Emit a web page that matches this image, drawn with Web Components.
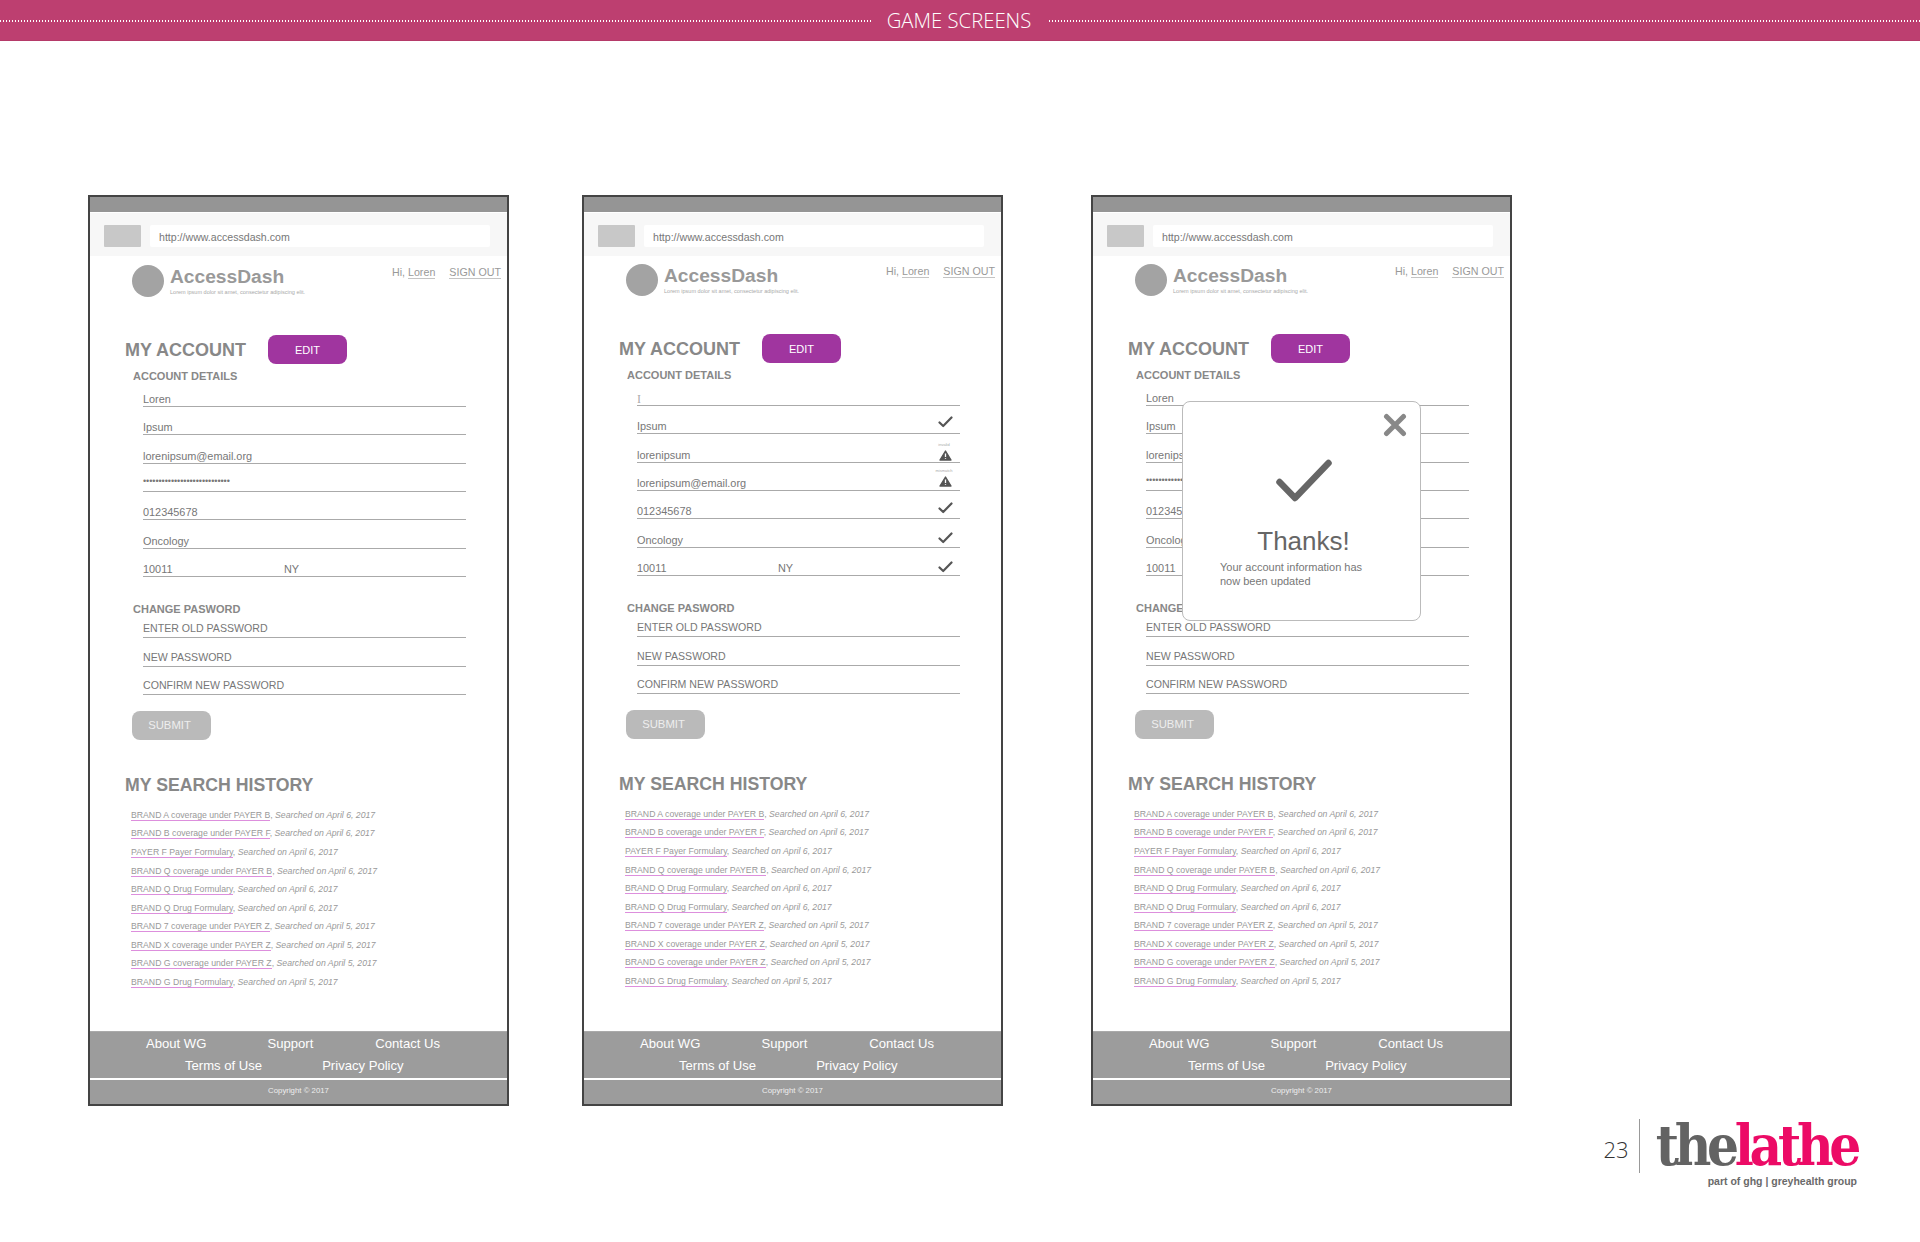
<!DOCTYPE html>
<html>
<head>
<meta charset="utf-8">
<title>Game Screens</title>
<style>
  html, body { margin: 0; background: #fff; }
  body { width: 1920px; height: 1242px; overflow: hidden; font-family: "Liberation Sans", Arial, sans-serif; }
  .row { display: flex; align-items: flex-start; padding: 154px 0 0 88px; }
  #second { margin-left: 73px; }
  #third { margin-left: 88px; }
</style>
</head>
<body>
<page-banner>GAME SCREENS</page-banner>
<div class="row">
  <account-screen mode="view"></account-screen>
  <account-screen id="second" mode="validate" shift="-1"></account-screen>
  <account-screen id="third" mode="thanks" shift="-1"></account-screen>
</div>
<page-brand page="23"></page-brand>

<script>
const CHECK = `<svg width="15" height="12" viewBox="0 0 15 12"><path d="M1.5 6.5 5.2 10 13.5 1.5" fill="none" stroke="#555" stroke-width="2.2" stroke-linecap="round" stroke-linejoin="round"/></svg>`;
const WARN = `<svg width="13" height="11" viewBox="0 0 13 11"><path d="M6.5 1 12 10H1Z" fill="#555" stroke="#555" stroke-width="1.4" stroke-linejoin="round"/><path d="M6.5 3.6V7M6.5 8.2V9" stroke="#fff" stroke-width="1.3"/></svg>`;

const HISTORY = [
  ["BRAND A coverage under PAYER B", "April 6, 2017"],
  ["BRAND B coverage under PAYER F", "April 6, 2017"],
  ["PAYER F Payer Formulary", "April 6, 2017"],
  ["BRAND Q coverage under PAYER B", "April 6, 2017"],
  ["BRAND Q Drug Formulary", "April 6, 2017"],
  ["BRAND Q Drug Formulary", "April 6, 2017"],
  ["BRAND 7 coverage under PAYER Z", "April 5, 2017"],
  ["BRAND X coverage under PAYER Z", "April 5, 2017"],
  ["BRAND G coverage under PAYER Z", "April 5, 2017"],
  ["BRAND G Drug Formulary", "April 5, 2017"],
];

customElements.define("page-banner", class extends HTMLElement {
  constructor() {
    super();
    this.attachShadow({mode: "open"}).innerHTML = `
      <style>
        :host { display: flex; align-items: center; gap: 16px; height: 40px; background: #bd3f70; border-bottom: 1px solid #b53a69;
                color: #fff; font: 300 20.3px "Open Sans", sans-serif; }
        i { flex: 1; height: 2px; margin-top: 1px; background: repeating-linear-gradient(90deg, #fff 0 1.5px, transparent 1.5px 3px); }
        i:last-child { margin-left: 2px; }
      </style>
      <i></i><slot></slot><i></i>`;
  }
});

customElements.define("form-field", class extends HTMLElement {
  constructor() {
    super();
    this.attachShadow({mode: "open"}).innerHTML = `
      <style>
        :host { display: flex; align-items: flex-end; position: relative; box-sizing: border-box; height: 28.35px; margin-left: 18px; width: 323px;
                border-bottom: 1.5px solid #aaa; padding-bottom: 0; font-size: 10.9px; line-height: 14px; color: #777; }
        .second { position: absolute; left: 141px; bottom: 0; }
        .mark { position: absolute; right: 7px; bottom: var(--lift, 5px); line-height: 0; }
        .note { position: absolute; right: 1px; bottom: calc(var(--lift, 2px) + 14px); width: 30px; text-align: center; font-size: 4px; line-height: 5px; color: #aaa; }
        .mark.warn { right: 8px; }
      </style>
      <slot></slot>`;
  }
  connectedCallback() {
    const root = this.shadowRoot;
    const second = this.getAttribute("second");
    if (second) root.innerHTML += `<span class="second">${second}</span>`;
    const mark = this.getAttribute("mark");
    if (mark === "check") root.innerHTML += `<span class="mark">${CHECK}</span>`;
    if (mark === "warn") {
      root.innerHTML += `<span class="mark warn">${WARN}</span><span class="note">${this.getAttribute("note")}</span>`;
    }
  }
});

customElements.define("history-row", class extends HTMLElement {
  constructor() {
    super();
    this.attachShadow({mode: "open"}).innerHTML = `
      <style>
        :host { display: block; height: 18.55px; font-size: 8.7px; line-height: 13px; color: #999; white-space: nowrap; }
        a { color: #999; border-bottom: 1px solid #dd8fdd; }
        em { font-style: italic; }
      </style>
      <a></a>, <em></em>`;
  }
  connectedCallback() {
    this.shadowRoot.querySelector("a").textContent = this.getAttribute("name");
    this.shadowRoot.querySelector("em").textContent = "Searched on " + this.getAttribute("date");
  }
});

customElements.define("thanks-dialog", class extends HTMLElement {
  constructor() {
    super();
    this.attachShadow({mode: "open"}).innerHTML = `
      <style>
        :host { display: flex; flex-direction: column; position: absolute; left: 89px; top: 204px; width: 239px; height: 220px; box-sizing: border-box;
                background: #fff; border: 1.5px solid #bbb; border-radius: 8px; }
        .close { position: absolute; right: 13px; top: 11px; line-height: 0; }
        .tick { margin: 57px 0 0 93px; line-height: 0; }
        h2 { margin: 22px 0 0; font-size: 26px; line-height: 32px; font-weight: 400; color: #666; text-align: center; padding-left: 4px; }
        p { margin: 4px 0 0 37px; font-size: 11px; line-height: 13.5px; color: #777; }
      </style>
      <span class="close"><svg width="24" height="24" viewBox="0 0 24 24"><path d="M3.5 3.5 20.5 20.5M20.5 3.5 3.5 20.5" stroke="#888" stroke-width="5" stroke-linecap="round"/></svg></span>
      <span class="tick"><svg width="56" height="44" viewBox="0 0 56 44"><path d="M3.5 23 19 39 52.5 4" fill="none" stroke="#666" stroke-width="6.5" stroke-linecap="round" stroke-linejoin="round"/></svg></span>
      <h2>Thanks!</h2>
      <p>Your account information has<br>now been updated</p>`;
  }
});

customElements.define("account-screen", class extends HTMLElement {
  constructor() {
    super();
    const shift = Number(this.getAttribute("shift") || 0);
    const mode = this.getAttribute("mode");
    // the dialog covers the state field on the third screen
    const state = mode === "thanks" ? "" : `second="NY"`;
    const details = mode === "validate" ? `
        <form-field><span style="color:#aaa;font-family:'Liberation Serif',serif;font-size:12px;margin-bottom:-1px">I</span></form-field>
        <form-field mark="check">Ipsum</form-field>
        <form-field mark="warn" note="invalid" style="--lift:1px">lorenipsum</form-field>
        <form-field mark="warn" note="mismatch" style="--lift:3px">lorenipsum@email.org</form-field>
        <form-field mark="check" style="--lift:4px">012345678</form-field>
        <form-field mark="check" style="--lift:3px">Oncology</form-field>
        <form-field mark="check" second="NY" style="--lift:2px">10011</form-field>` : `
        <form-field>Loren</form-field>
        <form-field>Ipsum</form-field>
        <form-field>lorenipsum@email.org</form-field>
        <form-field><span style="font-size:9px;letter-spacing:-.05px;margin-bottom:3px">••••••••••••••••••••••••••••</span></form-field>
        <form-field>012345678</form-field>
        <form-field>Oncology</form-field>
        <form-field ${state}>10011</form-field>`;
    const rows = HISTORY.map(h => `<history-row name="${h[0]}" date="${h[1]}"></history-row>`).join("");
    this.attachShadow({mode: "open"}).innerHTML = `
      <style>
        :host { display: flex; flex-direction: column; position: relative; flex: none; box-sizing: border-box; width: 421px; height: 911px;
                border: 2px solid #444; background: #fff; color: #888; }
        .top { flex: none; height: 15px; background: #959595; border-bottom: 1px solid #fff; }
        .bar { flex: none; display: flex; gap: 9px; height: 43px; box-sizing: border-box; padding: 12px 17px 9px 14px; background: #f7f7f7; }
        .bar b { width: 37px; background: #c8c8c8; border-radius: 1px; }
        .bar span { flex: 1; background: #fff; border-radius: 2px; padding: 2px 0 0 9px; font-size: 10.6px; line-height: 21px; color: #777; }
        .head { flex: none; display: flex; height: 79px; box-sizing: border-box; padding: 9px 6px 0 42px; margin-top: ${shift}px; }
        .dot { width: 32px; height: 32px; border-radius: 50%; background: #a3a3a3; }
        .name { margin-left: 6px; font-size: 19.2px; line-height: 24px; font-weight: 700; color: #999; }
        .name small { display: block; font-size: 5.55px; line-height: 6px; font-weight: 400; color: #aaa; margin-top: 0; }
        .user { margin-left: auto; display: flex; gap: 14px; font-size: 10.7px; line-height: 13px; color: #999; }
        .user span { padding-top: 1px; height: 12px; }
        .user u { text-decoration: none; border-bottom: 1.5px solid #c4c4c4; padding-bottom: 0; }
        .body { padding-left: 35px; }
        .title { display: flex; align-items: center; height: 29px; }
        h1 { margin: 0; font-size: 18px; line-height: 22px; font-weight: 700; color: #888; }
        .btn { display: flex; align-items: center; justify-content: center; width: 79px; height: 29px; border-radius: 8px; font-size: 11px; color: #fff; }
        .edit { margin-left: 22px; background: #a0359f; }
        h3 { margin: 5px 0 0 8px; font-size: 11px; line-height: 14px; font-weight: 700; color: #888; }
        .details { margin-top: -4.5px; }
        .change { margin-top: 25px; }
        .pw { margin-top: -6px; }
        .pw form-field { font-size: 10.6px; padding-bottom: 2px; }
        .submit { margin: 16px 0 0 7px; background: #bababa; color: #eee; font-size: 11.3px; box-sizing: border-box; padding-right: 4px; }
        .hist { margin-top: 34.5px; font-size: 17.7px; }
        .list { margin: 12.5px 0 0 6px; }
        .foot { margin-top: auto; flex: none; display: flex; flex-direction: column; height: 73px; box-sizing: border-box; background: #9c9c9c; color: #fff; font-size: 13.1px; line-height: 15px; border-top: 1px solid #aaa; padding-top: 4px; }
        .foot div { display: flex; }
        .one { padding-left: 56px; gap: 61px; }
        .one span + span + span { margin-left: 1px; }
        .two { padding-left: 95px; gap: 60px; margin-top: 7px; }
        .foot hr { width: 100%; margin: 5px 0 0; border: 0; height: 2px; background: #fff; }
        .copy { margin-top: 6px; justify-content: center; font-size: 7.8px; line-height: 10px; color: #eee; }
      </style>
      <div class="top"></div>
      <div class="bar"><b></b><span>http://www.accessdash.com</span></div>
      <div class="head">
        <div class="dot"></div>
        <div class="name">AccessDash<small>Lorem ipsum dolor sit amet, consectetur adipiscing elit.</small></div>
        <div class="user"><span>Hi, <u>Loren</u></span><span><u>SIGN OUT</u></span></div>
      </div>
      <div class="body">
        <div class="title"><h1>MY ACCOUNT</h1><div class="btn edit">EDIT</div></div>
        <h3>ACCOUNT DETAILS</h3>
        <div class="details">${details}</div>
        <h3 class="change">CHANGE PASWORD</h3>
        <div class="pw">
          <form-field>ENTER OLD PASSWORD</form-field>
          <form-field>NEW PASSWORD</form-field>
          <form-field>CONFIRM NEW PASSWORD</form-field>
        </div>
        <div class="btn submit">SUBMIT</div>
        <h1 class="hist">MY SEARCH HISTORY</h1>
        <div class="list">${rows}</div>
      </div>
      <div class="foot">
        <div class="one"><span>About WG</span><span>Support</span><span>Contact Us</span></div>
        <div class="two"><span>Terms of Use</span><span>Privacy Policy</span></div>
        <hr>
        <div class="copy">Copyright © 2017</div>
      </div>
      ${mode === "thanks" ? "<thanks-dialog></thanks-dialog>" : ""}`;
  }
});

customElements.define("page-brand", class extends HTMLElement {
  constructor() {
    super();
    this.attachShadow({mode: "open"}).innerHTML = `
      <style>
        :host { display: flex; justify-content: flex-end; margin: 13px 63px 0 0; }
        .num { align-self: center; font: 300 22px "Open Sans", sans-serif; color: #333; padding: 6px 10px 0 0; }
        .mark { border-left: 1px solid #999; padding-left: 16px; height: 54px; }
        .word { font: 700 56px/52px "DejaVu Serif", serif; font-stretch: condensed; letter-spacing: -4.3px; color: #636363; white-space: nowrap; }
        .word span { color: #ec0b66; }
        .sub { margin-top: 4px; text-align: right; font-size: 10.5px; line-height: 12px; font-weight: 700; color: #6a6a6a; white-space: nowrap; }
      </style>
      <span class="num">${this.getAttribute("page")}</span>
      <div class="mark"><div class="word">the<span>lathe</span></div><div class="sub">part of ghg | greyhealth group</div></div>`;
  }
});
</script>
</body>
</html>
